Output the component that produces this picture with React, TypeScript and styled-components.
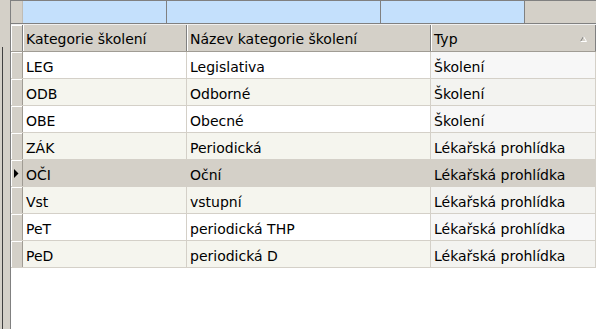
import React from "react";
import styled, { createGlobalStyle } from "styled-components";

const GlobalStyle = createGlobalStyle`
  html, body {
    margin: 0;
    padding: 0;
  }
  body {
    font-family: "DejaVu Sans", "Liberation Sans", sans-serif;
    font-size: 14px;
    color: #000;
    background: #d4d0c8;
  }
`;

const rows = [
  { code: "LEG", name: "Legislativa", type: "Školení" },
  { code: "ODB", name: "Odborné", type: "Školení" },
  { code: "OBE", name: "Obecné", type: "Školení" },
  { code: "ZÁK", name: "Periodická", type: "Lékařská prohlídka" },
  { code: "OČI", name: "Oční", type: "Lékařská prohlídka" },
  { code: "Vst", name: "vstupní", type: "Lékařská prohlídka" },
  { code: "PeT", name: "periodická THP", type: "Lékařská prohlídka" },
  { code: "PeD", name: "periodická D", type: "Lékařská prohlídka" },
];

const selectedIndex = 4;

type Tone = "white" | "cream" | "selected";

const Window = styled.div`
  width: 596px;
  height: 329px;
  display: flex;
  overflow: hidden;
  background: #d4d0c8;
`;

const Gutter = styled.div`
  width: 10px;
  flex: none;
  padding: 47px 0 0 2px;
  box-sizing: border-box;
`;

const GutterLine = styled.div`
  height: 100%;
  border-left: 1px solid #404040;
`;

const Grid = styled.div`
  flex: 1;
  display: flex;
  flex-direction: column;
  border-left: 1px solid #808080;
  border-top: 1px solid #808080;
  background: #fff;
`;

const GroupStrip = styled.div`
  height: 22px;
  display: grid;
  grid-template-columns: 12px 144px 214px 144px 1fr;
  border-bottom: 1px solid #808080;
  background: #d4d0c8;
`;

const StripCell = styled.div<{ $blue?: boolean }>`
  background: ${(p) => (p.$blue ? "#c4e0fc" : "#d4d0c8")};
  border-right: 1px solid ${(p) => (p.$blue ? "#808080" : "#c0bcb4")};
  &:last-child {
    border-right: none;
  }
`;

const Columns = "12px 164px 244px 1fr";

const HeaderRow = styled.div`
  height: 26px;
  display: grid;
  grid-template-columns: ${Columns};
  border-top: 1px solid #f0f0f0;
  border-bottom: 1px solid #a09c94;
  background: #d4d0c8;
`;

const HeaderCell = styled.div`
  display: flex;
  align-items: center;
  justify-content: space-between;
  padding: 2px 8px 0 3px;
  border-right: 1px solid #808080;
  box-shadow: inset 1px 0 0 #ffffff;
  white-space: nowrap;
  &:first-child {
    box-shadow: inset 1px 1px 0 #ffffff;
  }
`;

const SortGlyph = () => (
  <svg width="7" height="6" viewBox="0 0 7 6">
    <path d="M3.5 0.5 L0.5 5.5" stroke="#808080" strokeWidth="1" fill="none" />
    <path d="M3.5 0.5 L6.5 5.5 L0.5 5.5" stroke="#ffffff" strokeWidth="1" fill="none" />
  </svg>
);

const Row = styled.div<{ $tone: Tone }>`
  height: 26px;
  display: grid;
  grid-template-columns: ${Columns};
  border-bottom: 1px solid #d4d0c8;
  background: ${(p) =>
    p.$tone === "selected" ? "#d4d0c8" : p.$tone === "cream" ? "#f5f5ee" : "#ffffff"};
`;

const RowHeader = styled.div`
  display: flex;
  align-items: center;
  justify-content: center;
  background: #d4d0c8;
  border-right: 1px solid #a09c94;
  box-shadow: inset 1px 1px 0 #ffffff;
`;

const Cell = styled.div<{ $sorted?: boolean; $tone: Tone }>`
  display: flex;
  align-items: center;
  padding: 3px 0 0 3px;
  border-right: 1px solid #d4d0c8;
  white-space: nowrap;
  overflow: hidden;
  background: ${(p) =>
    p.$tone === "selected"
      ? "#d4d0c8"
      : p.$sorted
      ? p.$tone === "cream"
        ? "#f3f3f0"
        : "#f7f7f7"
      : "transparent"};
`;

const Pointer = () => (
  <svg width="5" height="9" viewBox="0 0 5 9">
    <path d="M0 0 L4.5 4.5 L0 9 Z" fill="#000" />
  </svg>
);

const Empty = styled.div`
  flex: 1;
  background: #fff;
`;

export default function App() {
  return (
    <>
      <GlobalStyle />
      <Window>
        <Gutter>
          <GutterLine />
        </Gutter>
        <Grid>
          <GroupStrip>
            <StripCell />
            <StripCell $blue />
            <StripCell $blue />
            <StripCell $blue />
            <StripCell />
          </GroupStrip>
          <HeaderRow>
            <HeaderCell />
            <HeaderCell>Kategorie školení</HeaderCell>
            <HeaderCell>Název kategorie školení</HeaderCell>
            <HeaderCell>
              Typ
              <SortGlyph />
            </HeaderCell>
          </HeaderRow>
          {rows.map((r, i) => {
            const tone: Tone = i === selectedIndex ? "selected" : i % 2 === 1 ? "cream" : "white";
            return (
              <Row key={r.code} $tone={tone}>
                <RowHeader>{i === selectedIndex && <Pointer />}</RowHeader>
                <Cell $tone={tone}>{r.code}</Cell>
                <Cell $tone={tone}>{r.name}</Cell>
                <Cell $tone={tone} $sorted>
                  {r.type}
                </Cell>
              </Row>
            );
          })}
          <Empty />
        </Grid>
      </Window>
    </>
  );
}
